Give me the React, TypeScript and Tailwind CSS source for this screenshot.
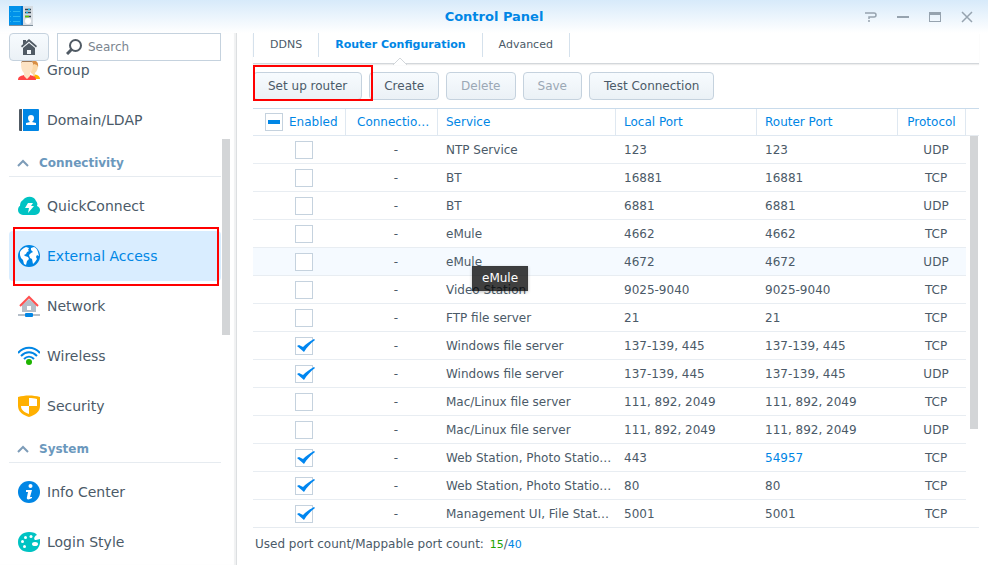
import React from "react";

type Port = {
  service: string;
  local: string;
  router: string;
  protocol: "TCP" | "UDP";
  enabled?: boolean;
  hovered?: boolean;
  remapped?: boolean;
};

const ports: Port[] = [
  { service: "NTP Service", local: "123", router: "123", protocol: "UDP" },
  { service: "BT", local: "16881", router: "16881", protocol: "TCP" },
  { service: "BT", local: "6881", router: "6881", protocol: "UDP" },
  { service: "eMule", local: "4662", router: "4662", protocol: "TCP" },
  { service: "eMule", local: "4672", router: "4672", protocol: "UDP", hovered: true },
  { service: "Video Station", local: "9025-9040", router: "9025-9040", protocol: "TCP" },
  { service: "FTP file server", local: "21", router: "21", protocol: "TCP" },
  { service: "Windows file server", local: "137-139, 445", router: "137-139, 445", protocol: "TCP", enabled: true },
  { service: "Windows file server", local: "137-139, 445", router: "137-139, 445", protocol: "UDP", enabled: true },
  { service: "Mac/Linux file server", local: "111, 892, 2049", router: "111, 892, 2049", protocol: "TCP" },
  { service: "Mac/Linux file server", local: "111, 892, 2049", router: "111, 892, 2049", protocol: "UDP" },
  { service: "Web Station, Photo Statio…", local: "443", router: "54957", protocol: "TCP", enabled: true, remapped: true },
  { service: "Web Station, Photo Statio…", local: "80", router: "80", protocol: "TCP", enabled: true },
  { service: "Management UI, File Stat…", local: "5001", router: "5001", protocol: "TCP", enabled: true },
];

const svgProps = { width: 22, height: 22, viewBox: "0 0 22 22", "aria-hidden": true } as const;

function GroupIcon() {
  return (
    <svg {...svgProps}>
      <path d="M15 15l4 1c2 1 3 2 3 4h-5z" fill="#ffb400" />
      <path d="M13 3c3-2 7-1 7 3s-1 6-3 8v3l-4-3z" fill="#fbd9a8" />
      <path d="M13 3c4-3 8 0 7 5l-1-2-3-1-2 2z" fill="#d98f45" />
      <path d="M0 21c0-3 2-4 6-5l3 3 3-3c4 1 6 2 6 5z" fill="#ff4444" />
      <path d="M3 4c0-3 12-3 12 0 0 6-1 8-3 10v3l-3 3-3-3v-3C4 12 3 10 3 4z" fill="#fde3c4" />
      <path d="M3 4c0-4 12-4 12 0l-1-1H4z" fill="#a07a58" />
    </svg>
  );
}

function DomainIcon() {
  return (
    <svg {...svgProps}>
      <path d="M2 0h2v22H2a1 1 0 0 1-1-1V1a1 1 0 0 1 1-1z" fill="#505a64" />
      <path d="M5 0h15a1 1 0 0 1 1 1v20a1 1 0 0 1-1 1H5z" fill="#0086e5" />
      <path d="M13 6c2 0 3 1 3 3s-1 3-2 4l4 1v2H8v-2l4-1c-1-1-2-2-2-4s1-3 3-3z" fill="#fff" />
    </svg>
  );
}

function QuickConnectIcon() {
  return (
    <svg {...svgProps}>
      <path d="M5 20a5 5 0 0 1-5-5c0-2 1-4 2-4 0-3 1-5 3-6 2-4 11-5 13 1 1 1 2 3 1 5 2 1 3 2 3 4a5 5 0 0 1-5 5z" fill="#00c3c3" />
      <path d="M10 8h5l-2 3h3l-6 7 1-5H7z" fill="#fff" />
    </svg>
  );
}

function GlobeIcon() {
  return (
    <svg {...svgProps}>
      <circle cx="11" cy="11" r="11" fill="#0086e5" />
      <path d="M2 7c1-2 3-4 6-5l3 1-1 2 1 1-2 1-1 2-2 1 1 1 3 1 1 2-2 2-1 4-2-1-1-4-2-2-1-3z" fill="#fff" />
      <path d="M13 3l3-1c2 1 3 2 4 5l1 4-2-1-1 2 1 2-2 3-2 2-1-5-2-1-1-3 2-2 2-1-2-2z" fill="#fff" />
    </svg>
  );
}

function NetworkIcon() {
  return (
    <svg {...svgProps}>
      <path d="M4 10l7-6 7 6v7H4z" fill="#b4bec8" />
      <path d="M2 11l9-9 9 9" fill="none" stroke="#ff5050" strokeWidth="2" />
      <path d="M9 11h4v4H9z" fill="#fff" />
      <path d="M0 19h22v2H0z" fill="#b4bec8" />
      <rect x="7" y="18" width="8" height="4" rx="1" fill="#0086e5" />
    </svg>
  );
}

function WirelessIcon() {
  return (
    <svg {...svgProps}>
      <g fill="none" stroke="#0086e5" strokeWidth="2">
        <path d="M0 8c6-7 16-7 22 0" />
        <path d="M3 11c5-5 11-5 16 0" />
        <path d="M6 14c3-3 7-3 10 0" />
      </g>
      <circle cx="11" cy="17" r="3" fill="#1eb400" />
    </svg>
  );
}

function SecurityIcon() {
  return (
    <svg {...svgProps}>
      <path d="M0 2c7-2 15-2 22 0v9c0 6-5 9-11 11C5 20 0 17 0 11z" fill="#ffb000" />
      <path d="M11 3c3 0 5 0 8 1v7h-8zM3 11h8v8c-5-2-8-4-8-8z" fill="#fff" />
    </svg>
  );
}

function InfoIcon() {
  return (
    <svg {...svgProps}>
      <circle cx="11" cy="11" r="11" fill="#0086e5" />
      <circle cx="12.5" cy="5" r="2" fill="#fff" />
      <path d="M8 9h6l-2 7h2v1c-3 2-6 2-5-1l1-5H8z" fill="#fff" />
    </svg>
  );
}

function PaletteIcon() {
  return (
    <svg {...svgProps}>
      <path d="M11 1c4 0 7 1 8 3-3 1-4 5-1 5l4-1c1 8-4 13-11 13S0 17 0 11 5 1 11 1z" fill="#00c3c3" />
      <g fill="#fff">
        <circle cx="13" cy="5.500" r="1.500" />
        <circle cx="7.500" cy="6.500" r="1.500" />
        <circle cx="4.500" cy="10.500" r="1.500" />
        <circle cx="6.500" cy="15.500" r="1.500" />
        <ellipse cx="17" cy="13" rx="3" ry="2" />
      </g>
    </svg>
  );
}

function AppIcon() {
  return (
    <svg width="24" height="21" viewBox="0 0 24 21" aria-hidden="true">
      <path d="M0 19h24v1H0z" fill="#7f8f9c" />
      <path d="M14 0h10v19H14z" fill="#d6dce2" />
      <path d="M0 0h14v19H0z" fill="#0091ea" />
      <path d="M12 0h2v19h-2z" fill="#0073cc" />
      <path d="M1 5.500h1m2 0h7M1 10.500h1m2 0h7M1 15.500h1m2 0h7" stroke="#2eb6f0" />
      <path d="M16 3.500h6M16 6.500h6M16 10.500h6" stroke="#33414d" strokeWidth="1.500" />
      <path d="M19 3.500h2M17 6.500h2" stroke="#19b5e6" strokeWidth="1.500" />
      <path d="M16 10.500h4" stroke="#5fc400" strokeWidth="1.500" />
      <circle cx="19" cy="15" r="3" fill="#fff" />
    </svg>
  );
}

function NavItem({ icon, label, active }: { icon: React.ReactNode; label: string; active?: boolean }) {
  return (
    <a
      href="#"
      aria-current={active ? "page" : undefined}
      className={`flex h-[50px] shrink-0 items-center gap-[7px] rounded-sm pl-[9px] text-sm ${
        active ? "bg-[#d9edff] text-[#0086e5]" : "text-[#4b5a68]"
      }`}
    >
      {icon}
      {label}
    </a>
  );
}

function NavSection({ label }: { label: string }) {
  return (
    <button
      type="button"
      className="mb-1 flex h-8 w-full shrink-0 items-center gap-[10px] border-b border-[#e6ebf0] pt-1 pl-2 text-left text-xs font-bold text-[#6b98bd]"
    >
      <svg width="12" height="8" viewBox="0 0 12 8" aria-hidden="true">
        <path d="M1 7l5-5 5 5" fill="none" stroke="#7d9cb8" strokeWidth="2" />
      </svg>
      {label}
    </button>
  );
}

function ToolButton({ label, disabled }: { label: string; disabled?: boolean }) {
  return (
    <button
      type="button"
      disabled={disabled}
      className="h-7 rounded-sm border border-[#c5d2de] bg-linear-to-b from-[#f7fbfe] to-[#ebf1f6] px-[14px] text-xs text-[#4b5a68] disabled:text-[#9ba8b5]"
    >
      {label}
    </button>
  );
}

function Tick({ label, checked }: { label: string; checked?: boolean }) {
  return (
    <span className="relative block size-[18px]">
      <input
        type="checkbox"
        aria-label={label}
        defaultChecked={checked}
        className="peer block size-[18px] appearance-none border border-[#c5d2de] bg-white"
      />
      <svg
        width="20"
        height="18"
        viewBox="0 0 20 18"
        aria-hidden="true"
        className="pointer-events-none absolute top-0 left-0 hidden max-w-none peer-checked:block"
      >
        <path d="M2 9l2-1 4 2c3-3 7-6 11-8l1 1c-5 4-8 7-11 12z" fill="#0086f0" />
      </svg>
    </span>
  );
}

const th = "border-r border-b border-[#dfe8f1] pl-2 text-left font-normal whitespace-nowrap";
const td = "border-b border-[#e8edf2] pl-2 whitespace-nowrap group-last:border-b-0";

export default function App() {
  return (
    <div className="flex h-screen flex-col overflow-hidden bg-white font-['Verdana','DejaVu_Sans',sans-serif] text-xs text-[#4b5a68]">
      <header className="grid h-[33px] shrink-0 grid-cols-[1fr_auto_1fr] items-center bg-linear-to-b from-[#d7eafa] to-white px-[9px]">
        <AppIcon />
        <h1 className="text-[13px] font-bold text-[#0086e5]">Control Panel</h1>
        <div className="flex justify-end gap-3 pr-[2px]">
          <button type="button" aria-label="Help" className="grid size-5 place-items-center">
            <svg width="12" height="12" viewBox="0 0 12 12" aria-hidden="true">
              <path d="M0 2h9q2 0 2 2t-2 2H4v2M3 10h2" fill="none" stroke="#96a3af" strokeWidth="1.500" />
            </svg>
          </button>
          <button type="button" aria-label="Minimize" className="grid size-5 place-items-center">
            <svg width="12" height="12" viewBox="0 0 12 12" aria-hidden="true">
              <path d="M0 5h12v2H0z" fill="#96a3af" />
            </svg>
          </button>
          <button type="button" aria-label="Maximize" className="grid size-5 place-items-center">
            <svg width="12" height="12" viewBox="0 0 12 12" aria-hidden="true">
              <path d="M0 1h12v10H0zM1 4v6h10V4z" fill="#96a3af" fillRule="evenodd" />
            </svg>
          </button>
          <button type="button" aria-label="Close" className="grid size-5 place-items-center">
            <svg width="12" height="12" viewBox="0 0 12 12" aria-hidden="true">
              <path d="M1 1l10 10M11 1L1 11" stroke="#96a3af" strokeWidth="1.500" />
            </svg>
          </button>
        </div>
      </header>

      <div className="flex min-h-0 flex-1">
        <aside className="flex w-[237px] shrink-0 flex-col border-r border-[#dcdfe1] pl-[9px] shadow-[inset_-2px_0_1px_#f0f1f2]">
          <div className="flex shrink-0 gap-2 pr-[15px]">
            <button
              type="button"
              aria-label="Home"
              className="grid h-7 w-10 place-items-center rounded-sm border border-[#c5d2de] bg-linear-to-b from-[#f7fbfe] to-[#ebf1f6]"
            >
              <svg width="16" height="16" viewBox="0 0 16 16" aria-hidden="true">
                <path d="M8 0l8 7-1 1.500L8 2.500 1 8.500 0 7z" fill="#505a64" />
                <path d="M2 9l6-5 6 5v7H2z" fill="#505a64" />
                <path d="M6 11h4v4H6z" fill="#f3f7fa" />
                <path d="M2 1h3v2L2 5.500z" fill="#505a64" />
              </svg>
            </button>
            <label className="flex h-7 min-w-0 flex-1 items-center gap-[6px] border border-[#c5d2de] bg-white px-2">
              <svg width="16" height="16" viewBox="0 0 16 16" className="shrink-0" aria-hidden="true">
                <circle cx="9.500" cy="6.500" r="5.500" fill="none" stroke="#505a64" strokeWidth="2" />
                <path d="M6 10l-5 5" stroke="#505a64" strokeWidth="3" />
              </svg>
              <input
                type="text"
                aria-label="Search"
                placeholder="Search"
                className="w-full min-w-0 bg-transparent text-xs outline-none placeholder:text-[#7b858f]"
              />
            </label>
          </div>
          <div className="flex min-h-0 flex-1 overflow-hidden">
            <nav className="-mt-4 flex w-[212px] flex-col">
              <NavItem icon={<GroupIcon />} label="Group" />
              <NavItem icon={<DomainIcon />} label="Domain/LDAP" />
              <NavSection label="Connectivity" />
              <NavItem icon={<QuickConnectIcon />} label="QuickConnect" />
              <div className="relative">
                <NavItem icon={<GlobeIcon />} label="External Access" active />
                <div className="pointer-events-none absolute -top-1 right-[2px] -bottom-[5px] left-1 border-2 border-[#ff0000]" />
              </div>
              <NavItem icon={<NetworkIcon />} label="Network" />
              <NavItem icon={<WirelessIcon />} label="Wireless" />
              <NavItem icon={<SecurityIcon />} label="Security" />
              <NavSection label="System" />
              <NavItem icon={<InfoIcon />} label="Info Center" />
              <NavItem icon={<PaletteIcon />} label="Login Style" />
            </nav>
            <div className="mt-[78px] ml-px h-[196px] w-2 bg-[#d3d5d7]" />
          </div>
        </aside>

        <main className="flex min-w-0 flex-1 flex-col pr-[9px] pl-4">
          <nav className="flex h-[31px] shrink-0 items-start border-b border-[#d3d7db] text-[11px] shadow-[0_1px_1px_#eeeeee]">
            <a href="#" className="flex h-6 items-center border-x border-[#d5e1ec] px-4">
              DDNS
            </a>
            <a
              href="#"
              aria-current="page"
              className="relative flex h-6 items-center border-r border-[#d5e1ec] px-4 font-bold text-[#0086e5]"
            >
              Router Configuration
              <svg
                width="14"
                height="8"
                viewBox="0 0 14 8"
                aria-hidden="true"
                className="absolute top-6 left-1/2 -translate-x-1/2"
              >
                <path d="M0 8l7-7 7 7" fill="#fff" stroke="#d3d7db" />
              </svg>
            </a>
            <a href="#" className="flex h-6 items-center border-r border-[#d5e1ec] px-4">
              Advanced
            </a>
          </nav>

          <div className="flex shrink-0 gap-[7px] py-2">
            <div className="relative">
              <ToolButton label="Set up router" />
              <div className="pointer-events-none absolute -top-[7px] -right-[11px] -bottom-px left-0 border-2 border-[#ff0000]" />
            </div>
            <ToolButton label="Create" />
            <ToolButton label="Delete" disabled />
            <ToolButton label="Save" disabled />
            <ToolButton label="Test Connection" />
          </div>

          <div className="flex shrink-0 border-t border-b border-t-[#c9dbeb] border-b-[#e6ebf0]">
            <table className="w-full min-w-0 flex-1 table-fixed border-separate border-spacing-0">
              <colgroup>
                <col className="w-[93px]" />
                <col className="w-[92px]" />
                <col />
                <col className="w-[141px]" />
                <col className="w-[141px]" />
                <col className="w-[68px]" />
              </colgroup>
              <thead className="text-[#0086e5]">
                <tr className="h-[27px]">
                  <th className={th}>
                    <span className="flex items-center gap-[6px] pl-1">
                      <span className="relative block size-[18px]">
                        <input
                          type="checkbox"
                          aria-label="Enable all"
                          className="block size-[18px] appearance-none border border-[#c5d2de] bg-white"
                        />
                        <span className="pointer-events-none absolute inset-x-[3px] top-[7px] h-1 bg-[#0086e5]" />
                      </span>
                      Enabled
                    </span>
                  </th>
                  <th className={th}>
                    <span className="pl-[3px]">Connectio…</span>
                  </th>
                  <th className={th}>Service</th>
                  <th className={th}>Local Port</th>
                  <th className={th}>Router Port</th>
                  <th className={th}>
                    <span className="flex justify-center pr-2">Protocol</span>
                  </th>
                </tr>
              </thead>
              <tbody>
                {ports.map((p, i) => (
                  <tr key={i} className={`group h-7 last:h-[27px] ${p.hovered ? "bg-[#f5faff]" : ""}`}>
                    <td className={td}>
                      <span className="flex justify-center">
                        <Tick label={`Enable ${p.service} ${p.protocol}`} checked={p.enabled} />
                      </span>
                    </td>
                    <td className={`${td} text-center`}>-</td>
                    {p.hovered ? (
                      <td className={`${td} relative`}>
                        {p.service}
                        <span
                          role="tooltip"
                          className="absolute top-[18px] left-[34px] z-10 border border-[#33333333] bg-[#000000c0] px-[9px] leading-[23px] text-white shadow-[0_1px_3px_#00000040]"
                        >
                          eMule
                        </span>
                      </td>
                    ) : (
                      <td className={td}>{p.service}</td>
                    )}
                    <td className={td}>{p.local}</td>
                    <td className={`${td} ${p.remapped ? "text-[#0086e5]" : ""}`}>{p.router}</td>
                    <td className={`${td} text-center`}>{p.protocol}</td>
                  </tr>
                ))}
              </tbody>
            </table>
            <div className="w-[13px] shrink-0">
              <div className="h-[27px] border-b border-[#e6ebf0]" />
              <div className="ml-1 h-[293px] w-2 bg-[#d3d5d7]" />
            </div>
          </div>

          <p className="shrink-0 pt-2 pl-[2px]">
            Used port count/Mappable port count:{" "}
            <span className="pl-[2px] text-[11px] text-[#1ea400]">15</span>/
            <span className="text-[11px] text-[#0086e5]">40</span>
          </p>
        </main>
      </div>
    </div>
  );
}
